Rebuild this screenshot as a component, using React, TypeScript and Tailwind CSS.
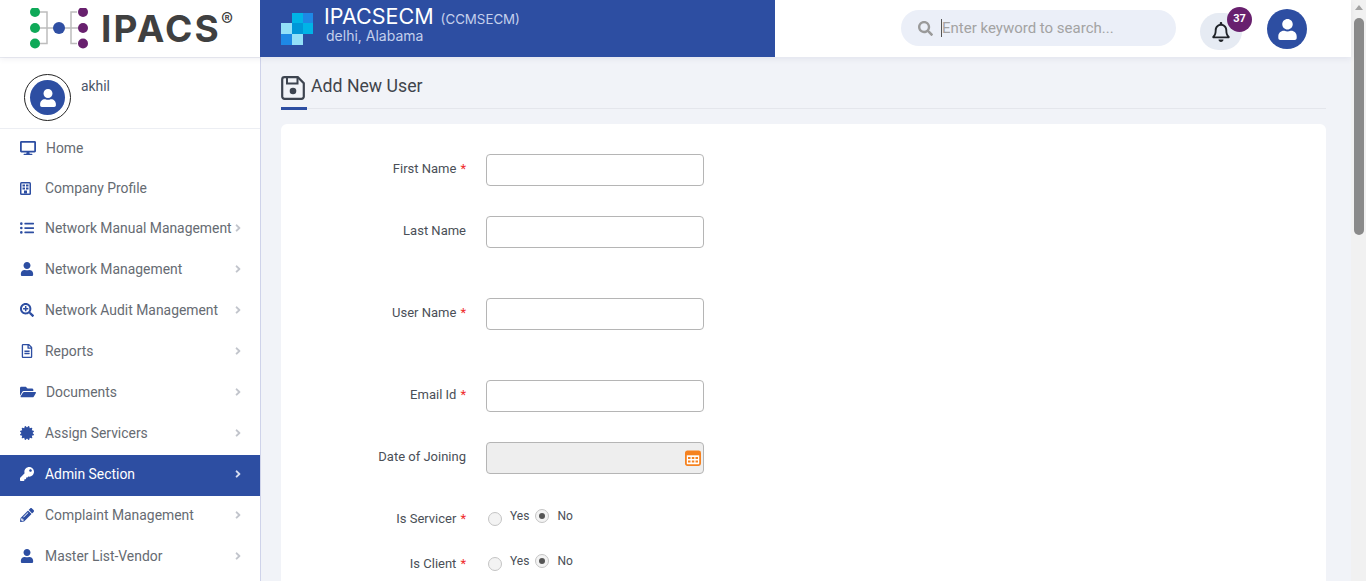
import {
  FaAngleRight,
  FaCertificate,
  FaDesktop,
  FaFolderOpen,
  FaKey,
  FaListUl,
  FaPencilAlt,
  FaRegBell,
  FaRegFileAlt,
  FaSearch,
  FaSearchPlus,
  FaUser,
} from "react-icons/fa";
import type { IconType } from "react-icons";

interface MenuItem {
  label: string;
  icon: IconType;
  arrow?: boolean;
  active?: boolean;
  short?: boolean;
  wideIcon?: boolean;
}

function BuildingIcon({ className }: { className?: string }) {
  return (
    <svg width="11" height="13" viewBox="0 0 11 13" className={className}>
      <rect x="0" y="0" width="11" height="13" rx="1.500" fill="currentColor" />
      <rect x="1.500" y="1.500" width="8" height="10" fill="#fff" />
      <g fill="currentColor">
        <rect x="2.500" y="2.500" width="2.500" height="2" />
        <rect x="6" y="2.500" width="2.500" height="2" />
        <rect x="2.500" y="5.500" width="2.500" height="2" />
        <rect x="6" y="5.500" width="2.500" height="2" />
        <rect x="4" y="8.500" width="3" height="3" />
      </g>
    </svg>
  );
}

const menu: MenuItem[] = [
  { label: "Home", icon: FaDesktop, short: true, wideIcon: true },
  { label: "Company Profile", icon: BuildingIcon, short: true },
  { label: "Network Manual Management", icon: FaListUl, arrow: true },
  { label: "Network Management", icon: FaUser, arrow: true },
  { label: "Network Audit Management", icon: FaSearchPlus, arrow: true },
  { label: "Reports", icon: FaRegFileAlt, arrow: true },
  { label: "Documents", icon: FaFolderOpen, arrow: true, wideIcon: true },
  { label: "Assign Servicers", icon: FaCertificate, arrow: true },
  { label: "Admin Section", icon: FaKey, arrow: true, active: true },
  { label: "Complaint Management", icon: FaPencilAlt, arrow: true },
  { label: "Master List-Vendor", icon: FaUser, arrow: true },
];

function Logo() {
  return (
    <svg width="64" height="42" viewBox="0 0 64 42" className="shrink-0">
      <path d="M6 4h12v31.500H6M6 20h48M48 4h-6v31.500h6" fill="none" stroke="#bdbdbd" strokeWidth="1.500" />
      <circle cx="6" cy="4" r="5" fill="#0fa958" />
      <circle cx="6" cy="20" r="5" fill="#0fa958" />
      <circle cx="6" cy="35.500" r="5" fill="#0fa958" />
      <circle cx="30" cy="20" r="6" fill="#2f4fa3" />
      <circle cx="54" cy="4" r="5" fill="#68206e" />
      <circle cx="54" cy="20" r="5" fill="#68206e" />
      <circle cx="54" cy="35.500" r="5" fill="#68206e" />
    </svg>
  );
}

function SaveIcon() {
  return (
    <svg width="24" height="24" viewBox="0 0 24 24" className="shrink-0">
      <path
        d="M3.500 1.200h13.300l6 6v13.300a2.300 2.300 0 0 1-2.300 2.300h-17a2.300 2.300 0 0 1-2.300-2.300v-17a2.300 2.300 0 0 1 2.300-2.300z"
        fill="none"
        stroke="#3d4450"
        strokeWidth="2.200"
      />
      <path d="M6 2v5.500h10.500V2" fill="none" stroke="#3d4450" strokeWidth="2" />
      <circle cx="12" cy="15" r="3.300" fill="#3d4450" />
    </svg>
  );
}

function Avatar({ size, icon }: { size: string; icon: string }) {
  return (
    <span className={`flex items-center justify-center rounded-full bg-[#2d4ea2] text-white ${size}`}>
      <FaUser className={icon} />
    </span>
  );
}

function TextRow({ label, required, mt }: { label: string; required?: boolean; mt: string }) {
  return (
    <div className={`flex items-center ${mt}`}>
      <label className="w-[185px] pb-[3px] text-right text-[13px] text-[#4a4f57]">
        {label}
        {required && <span className="ml-1 text-[#ef2b2b]">*</span>}
      </label>
      <input className="ml-[20px] h-[32px] w-[218px] rounded border border-[#b5b5b5] bg-white outline-none" />
    </div>
  );
}

function Radio({ checked }: { checked?: boolean }) {
  return (
    <span className="flex h-[14px] w-[14px] items-center justify-center rounded-full border border-[#c4c4c4] bg-[#f3f3f3]">
      {checked && <span className="h-[6px] w-[6px] rounded-full bg-[#555]" />}
    </span>
  );
}

function RadioRow({ label, mt }: { label: string; mt: string }) {
  return (
    <div className={`flex h-[20px] items-center ${mt}`}>
      <label className="w-[185px] pt-[5px] text-right text-[13px] text-[#4a4f57]">
        {label}
        <span className="ml-1 text-[#ef2b2b]">*</span>
      </label>
      <span className="ml-[22px] mt-[5px]">
        <Radio />
      </span>
      <span className="ml-2 text-xs text-[#4a4f57]">Yes</span>
      <span className="ml-[6px]">
        <Radio checked />
      </span>
      <span className="ml-2 text-xs text-[#4a4f57]">No</span>
    </div>
  );
}

export default function App() {
  return (
    <div className="flex h-screen overflow-hidden bg-white font-['Roboto',sans-serif]">
      <div className="flex min-w-0 flex-1 flex-col">
        {/* Top bar */}
        <header className="z-10 flex h-[57px] shrink-0 bg-white shadow-[0_2px_6px_rgba(60,70,110,0.08)]">
          <div className="flex w-[260px] shrink-0 items-center pl-[29px]">
            <Logo />
            <span className="ml-[8px] flex items-start font-['Inter',sans-serif] text-[37px] font-bold leading-none tracking-[2.200px] text-[#404040]">
              IPACS
              <span className="mt-[1px] text-[18px] font-normal leading-none tracking-normal">®</span>
            </span>
          </div>
          <div className="flex w-[515px] shrink-0 bg-[#2d4ea2] pl-[21px]">
            <svg width="32" height="32" viewBox="0 0 32 32" className="mt-[13px] shrink-0">
              <rect x="11" y="0" width="11" height="10" fill="#00b4e6" />
              <rect x="22" y="0" width="10" height="10" fill="#1e88e5" />
              <rect x="0" y="10" width="11" height="11" fill="#93e0f8" />
              <rect x="11" y="10" width="11" height="11" fill="#0097d8" />
              <rect x="22" y="10" width="10" height="11" fill="#00b4e6" />
              <rect x="0" y="21" width="11" height="11" fill="#1e88e5" />
              <rect x="11" y="21" width="11" height="11" fill="#93e0f8" />
            </svg>
            <div className="ml-[11px] font-['Inter',sans-serif]">
              <div className="mt-[4px] flex h-[25px] items-baseline text-[21.500px] leading-[25px] text-white">
                IPACSECM
                <span className="ml-[7px] text-[13.300px] text-[#c4d0ec]">(CCMSECM)</span>
              </div>
              <div className="ml-[2px] text-[14px] leading-[14px] text-[#c4d0ec]">delhi, Alabama</div>
            </div>
          </div>
          <div className="flex flex-1 items-start">
            <div className="ml-[126px] mt-[10px] flex h-[36px] w-[275px] items-center rounded-full bg-[#ebeff8] pl-[17px]">
              <FaSearch className="shrink-0 text-[15px] text-[#9a9a9a]" />
              <span className="ml-[8px] h-[18px] w-px shrink-0 bg-[#555]" />
              <input
                placeholder="Enter keyword to search..."
                className="w-[220px] bg-transparent text-[15px] text-[#555] outline-none placeholder:text-[#a3a3a3]"
              />
            </div>
            <div className="relative ml-[24px] mt-[13px] flex h-[37px] w-[42px] items-center justify-center rounded-full bg-[#e6ebf3]">
              <FaRegBell className="text-[20px] text-[#1f2328]" />
              <span className="absolute left-[27px] top-[-6px] flex h-[25px] w-[25px] items-center justify-center rounded-full bg-[#68206e] text-[11px] font-bold text-white">
                37
              </span>
            </div>
            <div className="ml-[25px] mt-[9px]">
              <Avatar size="h-[40px] w-[40px]" icon="text-[21px]" />
            </div>
          </div>
        </header>

        <div className="flex min-h-0 flex-1">
          {/* Sidebar */}
          <aside className="w-[261px] shrink-0 border-r border-[#cfd3ea] bg-white">
            <div className="flex h-[72px] border-y border-[#eceef3] pl-[24px] pt-[16px]">
              <span className="flex h-[47px] w-[47px] items-center justify-center rounded-full border border-[#222]">
                <Avatar size="h-[35px] w-[35px]" icon="text-[18px]" />
              </span>
              <span className="ml-[10px] mt-[2px] text-[13.900px] text-[#4a5568]">akhil</span>
            </div>
            <nav>
              {menu.map((item) => (
                <div
                  key={item.label}
                  className={`flex items-center pl-[20px] pr-[16px] text-[13.900px] ${
                    item.short ? "h-[40px] pb-[2px]" : "h-[41px] pb-[3px]"
                  } ${item.active ? "bg-[#2d4ea2] text-white" : "text-[#666b72]"}`}
                >
                  <span className={`flex shrink-0 ${item.wideIcon ? "w-[26px]" : "w-[25px]"} ${item.active ? "text-white" : "text-[#2d4ea2]"}`}>
                    <item.icon className={item.wideIcon ? "text-[16px]" : "text-[14px]"} />
                  </span>
                  <span className="whitespace-nowrap">{item.label}</span>
                  {item.arrow && (
                    <FaAngleRight
                      className={`ml-auto shrink-0 text-[12px] ${item.active ? "text-[#d5dcf0]" : "text-[#c2c5cc]"}`}
                    />
                  )}
                </div>
              ))}
            </nav>
          </aside>

          {/* Main */}
          <main className="min-w-0 flex-1 bg-[#f1f3f8] pl-[20px] pr-[25px]">
            <div className="relative flex h-[52px] border-b border-[#e4e6ec] pt-[19px]">
              <SaveIcon />
              <h1 className="ml-[6px] mt-[-2px] text-[17.700px] leading-[24px] text-[#3f444b]">Add New User</h1>
              <span className="absolute bottom-[-2px] left-0 h-[3px] w-[26px] bg-[#2d4ea2]" />
            </div>
            <section className="mt-[15px] h-[600px] rounded-md bg-white pt-[30px]">
              <TextRow label="First Name" required mt="" />
              <TextRow label="Last Name" mt="mt-[30px]" />
              <TextRow label="User Name" required mt="mt-[50px]" />
              <TextRow label="Email Id" required mt="mt-[50px]" />
              <div className="mt-[30px] flex items-center">
                <label className="w-[185px] pb-[3px] text-right text-[13px] text-[#4a4f57]">Date of Joining</label>
                <div className="relative ml-[20px] h-[32px] w-[218px] rounded border border-[#b5b5b5] bg-[#eeeeee]">
                  <svg width="16" height="16" viewBox="0 0 16 16" className="absolute right-[2px] top-[7px]">
                    <rect x="0.900" y="1.500" width="14.200" height="13.600" rx="1.500" fill="#fff" stroke="#f58220" strokeWidth="1.800" />
                    <rect x="0.900" y="1.500" width="14.200" height="3.800" fill="#f58220" />
                    <g fill="#f58220">
                      <rect x="3" y="7" width="2.500" height="2" />
                      <rect x="6.800" y="7" width="2.500" height="2" />
                      <rect x="10.500" y="7" width="2.500" height="2" />
                      <rect x="3" y="10.500" width="2.500" height="2" />
                      <rect x="6.800" y="10.500" width="2.500" height="2" />
                      <rect x="10.500" y="10.500" width="2.500" height="2" />
                    </g>
                  </svg>
                </div>
              </div>
              <RadioRow label="Is Servicer" mt="mt-[32px]" />
              <RadioRow label="Is Client" mt="mt-[25px]" />
            </section>
          </main>
        </div>
      </div>

      {/* Page scrollbar */}
      <div className="flex w-[15px] shrink-0 flex-col items-center bg-[#f1f1f1]">
        <span className="mt-[5px] h-0 w-0 border-x-[4px] border-b-[5px] border-x-transparent border-b-[#a3a3a3]" />
        <span className="mt-[8px] h-[217px] w-[10px] rounded-full bg-[#8a8a8a]" />
      </div>
    </div>
  );
}
